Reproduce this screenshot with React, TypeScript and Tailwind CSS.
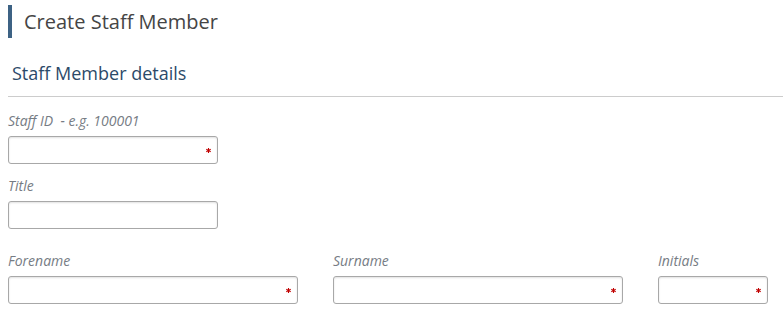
import React from "react";

function Asterisk() {
  return (
    <svg width="5" height="5" viewBox="0 0 5 5" className="absolute right-[7px] top-[12px]">
      <g stroke="#c00000" strokeWidth="1.1">
        <line x1="2.5" y1="0" x2="2.5" y2="5" />
        <line x1="0.3" y1="1.2" x2="4.7" y2="3.8" />
        <line x1="0.3" y1="3.8" x2="4.7" y2="1.2" />
      </g>
    </svg>
  );
}

function Field({ label, width, required }: { label: string; width: string; required?: boolean }) {
  return (
    <div className={`flex flex-col ${width}`}>
      <label className="text-[14px] leading-[18px] italic text-[#767c84] mb-[6px] whitespace-pre">{label}</label>
      <div className="relative">
        <div className="h-[28px] w-full rounded-[3px] border border-[#a8a8a8] bg-white shadow-[inset_0_1px_2px_rgba(0,0,0,0.12)]" />
        {required && <Asterisk />}
      </div>
    </div>
  );
}

export default function App() {
  return (
    <div className="bg-white w-[783px] h-[320px] overflow-hidden" style={{ fontFamily: '"Open Sans", sans-serif' }}>
      <div className="pt-[5px] pl-[8px] flex items-center">
        <div className="w-[4px] h-[33px] bg-[#3d6284]" />
        <h1 className="ml-[12px] text-[20px] leading-[33px] text-[#454545]">Create Staff Member</h1>
      </div>
      <div className="ml-[8px] mt-[23px] border-b border-[#cccccc] pb-[11px]">
        <h2 className="pl-[4px] text-[18px] leading-[24px] text-[#2c4a69]">Staff Member details</h2>
      </div>
      <div className="pl-[8px] pt-[15px]">
        <Field label="Staff ID  - e.g. 100001" width="w-[210px]" required />
        <div className="mt-[13px]">
          <Field label="Title" width="w-[210px]" />
        </div>
        <div className="mt-[23px] flex gap-[35px]">
          <Field label="Forename" width="w-[290px]" required />
          <Field label="Surname" width="w-[290px]" required />
          <Field label="Initials" width="w-[110px]" required />
        </div>
      </div>
    </div>
  );
}
